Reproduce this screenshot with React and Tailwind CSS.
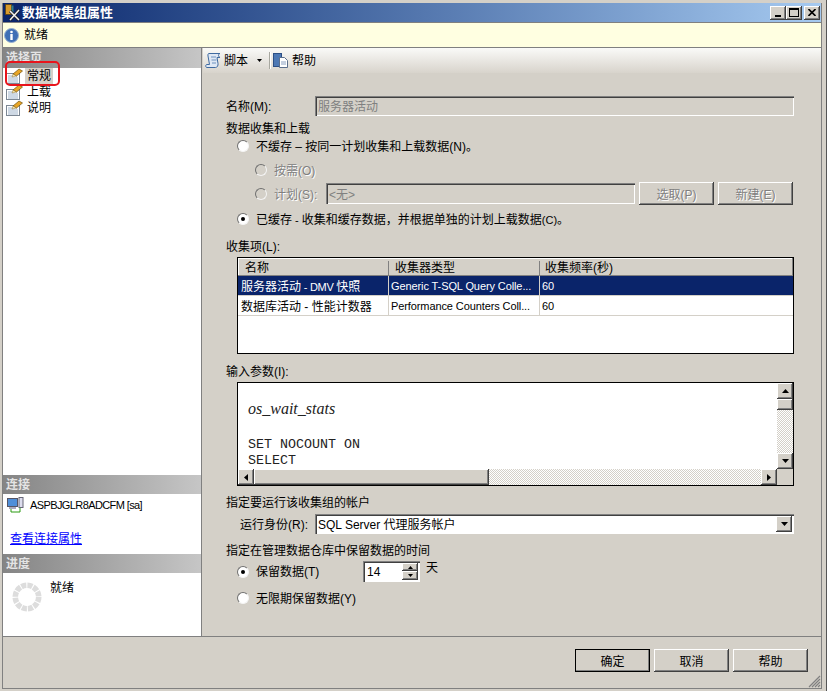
const raised =
  "bg-[#d4d0c8] shadow-[inset_-1px_-1px_0_#404040,inset_1px_1px_0_#fff,inset_-2px_-2px_0_#808080]";
const sunken =
  "shadow-[inset_1px_1px_0_#808080,inset_2px_2px_0_#404040,inset_-1px_-1px_0_#fff]";
const disabledText = "text-[#808080] [text-shadow:1px_1px_0_#fff]";
const dither =
  "bg-[repeating-conic-gradient(#fff_0_25%,#d4d0c8_0_50%)] bg-[length:2px_2px]";

const Arrow = ({ dir }) => {
  const points = {
    up: "0,4 3.5,0 7,4",
    down: "0,0 7,0 3.5,4",
    left: "4,0 4,7 0,3.5",
    right: "0,0 4,3.5 0,7",
  }[dir];
  const size = dir === "up" || dir === "down" ? [7, 4] : [4, 7];
  return (
    <svg width={size[0]} height={size[1]} viewBox={`0 0 ${size[0]} ${size[1]}`}>
      <polygon points={points} fill="#000" />
    </svg>
  );
};

const ScrollBtn = ({ dir, className = "" }) => (
  <div className={`w-[16px] h-[16px] flex items-center justify-center shrink-0 ${raised} ${className}`}>
    <Arrow dir={dir} />
  </div>
);

const Radio = ({ checked, disabled, className = "" }) => (
  <span
    className={`w-[12px] h-[12px] rounded-full flex items-center justify-center shrink-0 border border-t-[#707070] border-l-[#707070] border-r-[#f4f4f4] border-b-[#f4f4f4] ${
      disabled ? "bg-[#d4d0c8]" : "bg-white"
    } ${className}`}
  >
    {checked && <span className="w-[4px] h-[4px] rounded-full bg-black" />}
  </span>
);

const PageIcon = () => (
  <svg width="17" height="16" viewBox="0 0 17 16" className="shrink-0">
    <rect x="0.500" y="5.500" width="13" height="10" fill="#fdfdfd" stroke="#7c8794" />
    <path d="M2 8h4M2 10h10M2 12h10M2 14h10" stroke="#9fb4cc" />
    <path d="M7 6l6-5 3.500 2-6 5z" fill="#e8a526" stroke="#6e5210" strokeWidth="0.700" />
    <path d="M7 6l3.500 2-4.500 1z" fill="#f7e6a8" stroke="#6e5210" strokeWidth="0.400" />
  </svg>
);

const SectionHeader = ({ children }) => (
  <div className="h-[19px] shrink-0 flex items-center pl-[3px] bg-gradient-to-r from-[#858585] to-[#c6c6c6] text-[#e4e4e4] font-bold">
    {children}
  </div>
);

const Spinner = () => (
  <svg width="30" height="30" viewBox="0 0 32 32">
    <circle
      cx="16"
      cy="16"
      r="12.500"
      fill="none"
      stroke="#dddddd"
      strokeWidth="6"
      strokeDasharray="5.400 1.150"
    />
  </svg>
);

const FooterBtn = ({ children, primary }) => (
  <button
    className={`w-[75px] h-[23px] flex items-center justify-center ${raised} ${
      primary ? "outline outline-1 -outline-offset-1 outline-black" : ""
    }`}
  >
    <span className="mt-[2px]">{children}</span>
  </button>
);

const rows = [
  {
    id: "dmv",
    name: (
      <>
        服务器活动<span className="text-[11px] tracking-[-0.3px]"> - DMV </span>快照
      </>
    ),
    type: "Generic T-SQL Query Colle...",
    freq: "60",
    active: true,
  },
  {
    id: "perf",
    name: "数据库活动 - 性能计数器",
    type: "Performance Counters Coll...",
    freq: "60",
  },
];

export default function App() {
  return (
    <div className="w-[827px] h-[691px] overflow-hidden bg-[#d4d0c8] pt-[3px] pl-[2px] flex text-[12px] leading-none text-black [font-family:'Liberation_Sans','Noto_Sans_CJK_SC',sans-serif]">
      <div className="w-[820px] h-[686px] shrink-0 flex flex-col border-x border-b border-[#808080]">
        {/* title bar */}
        <div className="h-[19px] shrink-0 flex items-center bg-gradient-to-r from-[#0a246a] to-[#a6caf0]">
          <svg width="17" height="17" viewBox="0 0 17 17" className="ml-[1px] shrink-0">
            <rect x="1.500" y="0.500" width="6" height="10" fill="#d99a2b" stroke="#5c4210" strokeWidth="0.800" />
            <rect x="7.500" y="1.500" width="2" height="8" fill="#2f7f8c" />
            <path d="M6 7l9 9M15 6l-9 10" stroke="#222" strokeWidth="3" />
            <path d="M6 7l9 9M15 6l-9 10" stroke="#f2f2f2" strokeWidth="1.500" />
          </svg>
          <span className="ml-[1px] text-[13px] text-white font-bold">数据收集组属性</span>
          <div className="ml-auto mr-[1px] flex">
            <div className={`w-[16px] h-[14px] flex items-end justify-center pb-[3px] ${raised}`}>
              <span className="w-[6px] h-[2px] bg-black" />
            </div>
            <div className={`w-[16px] h-[14px] flex items-center justify-center ${raised}`}>
              <span className="w-[10px] h-[9px] border border-t-2 border-black" />
            </div>
            <div className={`w-[16px] h-[14px] ml-[2px] flex items-center justify-center ${raised}`}>
              <svg width="8" height="7" viewBox="0 0 8 7">
                <path d="M0.500 0l7 7M7.500 0l-7 7" stroke="#000" strokeWidth="1.600" />
              </svg>
            </div>
          </div>
        </div>

        {/* status bar */}
        <div className="h-[26px] shrink-0 flex items-center bg-[#ffffe1] border-y border-[#808080] pl-[1px]">
          <svg width="15" height="15" viewBox="0 0 15 15" className="shrink-0">
            <circle cx="7.500" cy="7.500" r="7" fill="#3f6fb5" stroke="#9ab0d0" />
            <circle cx="7.500" cy="4" r="1.300" fill="#fff" />
            <rect x="6.300" y="6" width="2.400" height="6" fill="#fff" />
          </svg>
          <span className="ml-[5px]">就绪</span>
        </div>

        <div className="flex-1 min-h-0 flex">
          {/* left panel */}
          <div className="relative w-[199px] shrink-0 bg-white border-r border-[#808080] flex flex-col">
            <div className="h-[20px] shrink-0 flex items-center pl-[3px] bg-gradient-to-r from-[#858585] to-[#c6c6c6] text-[#e4e4e4] font-bold">
              选择页
            </div>
            <div className="flex flex-col pl-[3px]">
              <div className="h-[16px] flex items-center">
                <PageIcon />
                <span className="ml-[2px] px-[2px] h-[16px] flex items-center bg-[#d4d0c8]">常规</span>
              </div>
              <div className="h-[16px] flex items-center">
                <PageIcon />
                <span className="ml-[2px] px-[2px]">上载</span>
              </div>
              <div className="h-[16px] flex items-center">
                <PageIcon />
                <span className="ml-[2px] px-[2px]">说明</span>
              </div>
            </div>

            <div className="mt-auto">
              <SectionHeader>连接</SectionHeader>
              <div className="h-[60px] relative pt-[3px] pl-[4px]">
                <div className="flex items-center">
                  <svg width="17" height="16" viewBox="0 0 17 16" className="shrink-0">
                    <rect x="0.500" y="1.500" width="10" height="8" fill="#4f8fd8" stroke="#556" />
                    <rect x="2" y="10" width="7" height="2" fill="#aab" />
                    <rect x="12" y="0.500" width="4" height="10" fill="#dde" stroke="#667" />
                    <path d="M4 12v3h9v-4" fill="none" stroke="#2a9a10" />
                  </svg>
                  <span className="ml-[6px] text-[11px] tracking-[-0.6px] whitespace-nowrap">ASPBJGLR8ADCFM [sa]</span>
                </div>
                <a className="absolute left-[7px] top-[39px] text-[#0000ff] underline">查看连接属性</a>
              </div>
              <SectionHeader>进度</SectionHeader>
              <div className="h-[63px] flex pl-[9px] pt-[9px]">
                <Spinner />
                <span className="ml-[8px]">就绪</span>
              </div>
            </div>

            {/* red highlight drawn over the screenshot */}
            <div className="absolute left-[2px] top-[13px] w-[55px] h-[25px] rounded-[5px] border-2 border-[#e8141c]" />
          </div>

          {/* right panel */}
          <div className="flex-1 min-w-0 border-l border-[#d4d0c8] flex flex-col">
            <div className="h-[25px] shrink-0 flex items-center pl-[2px] bg-gradient-to-b from-[#fafaf8] to-[#d8d4cc]">
              <svg width="17" height="17" viewBox="0 0 17 17" className="shrink-0">
                <path
                  d="M4 1.500h11c-2 .5-2 3 0 4h-3l1 6c.3 2-.7 4-2.500 4H1.500c-1-.5-1-2.500 0-3h3L3 4c-.2-1.500 0-2.500 1-2.500z"
                  fill="#dfe8f4"
                  stroke="#3f6aa0"
                />
                <path d="M6 5h5M6.500 8h5M7 11h4" stroke="#6f93c0" />
              </svg>
              <span className="ml-[2px]">脚本</span>
              <svg width="5" height="3" viewBox="0 0 5 3" className="ml-[9px] shrink-0">
                <polygon points="0,0 5,0 2.500,3" fill="#000" />
              </svg>
              <span className="ml-[7px] w-[1px] h-[17px] bg-[#a8a8a0] shadow-[1px_0_0_#fff]" />
              <svg width="16" height="17" viewBox="0 0 16 17" className="ml-[3px] shrink-0">
                <rect x="0.500" y="1.500" width="8" height="13" fill="#4d78b4" stroke="#2c4f85" />
                <path d="M6.500 5.500h5l3 3v7h-8z" fill="#fff" stroke="#5b6f8c" />
                <path d="M8 10h5M8 12h5" stroke="#8aa0c0" />
              </svg>
              <span className="ml-[3px]">帮助</span>
            </div>

            <div className="flex-1 min-h-0 pl-[23px] pr-[27px] pt-[23px] flex flex-col">
              <div className="h-[20px] flex items-center shrink-0">
                <span className="w-[89px] mt-[2px]">名称(M):</span>
                <div className={`flex-1 h-[20px] flex items-center pl-[3px] pt-[2px] text-[#808080] ${sunken}`}>服务器活动</div>
              </div>

              <div className="h-[16px] mt-[4px] pt-[2px] flex items-center shrink-0">数据收集和上载</div>

              <div className="h-[18px] mt-[1px] flex items-center pl-[11px] shrink-0">
                <Radio />
                <span className="ml-[7px] mt-[2px]">不缓存 – 按同一计划收集和上载数据(N)。</span>
              </div>

              <div className="h-[18px] mt-[6px] flex items-center pl-[29px] shrink-0">
                <Radio disabled />
                <span className={`ml-[7px] mt-[2px] ${disabledText}`}>按需(O)</span>
              </div>

              <div className="h-[23px] mt-[3px] flex items-center pl-[29px] shrink-0">
                <Radio disabled />
                <span className={`ml-[7px] mt-[2px] w-[52px] ${disabledText}`}>计划(S):</span>
                <div className={`w-[309px] h-[21px] flex items-center pl-[3px] pt-[2px] text-[#808080] ${sunken}`}>&lt;无&gt;</div>
                <div className={`w-[75px] h-[23px] ml-[4px] pt-[2px] flex items-center justify-center ${raised} ${disabledText}`}>选取(P)</div>
                <div className={`w-[75px] h-[23px] ml-[4px] pt-[2px] flex items-center justify-center ${raised} ${disabledText}`}>新建(E)</div>
              </div>

              <div className="h-[18px] mt-[5px] flex items-center pl-[11px] shrink-0">
                <Radio checked />
                <span className="ml-[7px] mt-[2px] whitespace-nowrap">
                  已缓存<span className="text-[11px]"> - </span>收集和缓存数据，并根据单独的计划上载数据<span className="text-[11px]">(C)</span>。
                </span>
              </div>

              <div className="h-[16px] mt-[10px] pt-[2px] flex items-center shrink-0">收集项(L):</div>

              {/* collection items */}
              <div className="h-[97px] mt-[3px] ml-[11px] border border-black bg-white shrink-0">
                <div className="h-[18px] pt-[2px] flex items-center bg-[#d4d0c8] shadow-[inset_-1px_-1px_0_#808080,inset_1px_1px_0_#fff]">
                  <div className="w-[150px] pl-[7px]">名称</div>
                  <div className="w-[151px] h-[14px] pl-[6px] flex items-center border-l border-[#808080]">收集器类型</div>
                  <div className="h-[14px] pl-[5px] flex items-center border-l border-[#808080]">收集频率(秒)</div>
                </div>
                {rows.map((row) => (
                  <div
                    key={row.id}
                    className={`h-[20px] flex items-center border-b border-[#d4d0c8] ${
                      row.active ? "bg-[#0a246a] text-white" : ""
                    }`}
                  >
                    <div className="w-[150px] pl-[3px] pt-[2px] whitespace-nowrap">{row.name}</div>
                    <div className="w-[151px] h-[19px] pl-[2px] pt-[2px] flex items-center border-l border-[#d4d0c8] text-[11px] tracking-[-0.1px] whitespace-nowrap">
                      {row.type}
                    </div>
                    <div className="h-[19px] pl-[2px] pt-[2px] flex items-center border-l border-[#d4d0c8] text-[11px]">{row.freq}</div>
                  </div>
                ))}
              </div>

              <div className="h-[16px] mt-[9px] pt-[2px] flex items-center shrink-0">输入参数(I):</div>

              {/* input parameters */}
              <div className="h-[104px] mt-[3px] ml-[11px] border border-black bg-white flex shrink-0">
                <div className="flex-1 min-w-0 flex flex-col">
                  <div className="flex-1 min-h-0 pl-[10px] pt-[18px] text-[#222222]">
                    <div className="h-[20px] text-[16px] italic [font-family:'Liberation_Serif',serif]">os_wait_stats</div>
                    <div className="h-[16px] mt-[17px] text-[13.33px] [font-family:'Liberation_Mono',monospace]">SET NOCOUNT ON</div>
                    <div className="h-[16px] text-[13.33px] [font-family:'Liberation_Mono',monospace]">SELECT</div>
                  </div>
                  <div className="h-[16px] shrink-0 flex">
                    <ScrollBtn dir="left" />
                    <div className={`w-[235px] h-[16px] ${raised}`} />
                    <div className={`flex-1 h-[16px] ${dither}`} />
                    <ScrollBtn dir="right" />
                  </div>
                </div>
                <div className="w-[16px] shrink-0 flex flex-col">
                  <ScrollBtn dir="up" />
                  <div className={`h-[11px] shrink-0 ${raised}`} />
                  <div className={`flex-1 ${dither}`} />
                  <ScrollBtn dir="down" />
                  <div className="h-[16px] shrink-0 bg-[#d4d0c8]" />
                </div>
              </div>

              <div className="h-[16px] mt-[8px] pt-[2px] flex items-center shrink-0">指定要运行该收集组的帐户</div>

              <div className="h-[20px] mt-[4px] flex items-center shrink-0">
                <span className="w-[89px] pl-[14px] mt-[2px]">运行身份(R):</span>
                <div className={`flex-1 h-[20px] flex items-center pl-[3px] pr-[2px] bg-white ${sunken}`}>
                  <span className="mt-[2px]">SQL Server 代理服务帐户</span>
                  <div className={`ml-auto w-[16px] h-[16px] flex items-center justify-center ${raised}`}>
                    <Arrow dir="down" />
                  </div>
                </div>
              </div>

              <div className="h-[16px] mt-[8px] pt-[2px] flex items-center shrink-0">指定在管理数据仓库中保留数据的时间</div>

              <div className="h-[21px] mt-[3px] flex items-center pl-[11px] shrink-0">
                <Radio checked />
                <span className="ml-[7px] w-[107px]">保留数据(T)</span>
                <div className={`w-[57px] h-[21px] flex items-center pl-[4px] pr-[2px] bg-white ${sunken}`}>
                  <span>14</span>
                  <div className="ml-auto w-[16px] flex flex-col">
                    <div className={`h-[8px] flex items-center justify-center ${raised}`}>
                      <svg width="5" height="3" viewBox="0 0 5 3">
                        <polygon points="0,3 5,3 2.500,0" fill="#000" />
                      </svg>
                    </div>
                    <div className={`h-[9px] flex items-center justify-center ${raised}`}>
                      <svg width="5" height="3" viewBox="0 0 5 3">
                        <polygon points="0,0 5,0 2.500,3" fill="#000" />
                      </svg>
                    </div>
                  </div>
                </div>
                <span className="ml-[6px] mb-[7px]">天</span>
              </div>

              <div className="h-[18px] mt-[7px] flex items-center pl-[11px] shrink-0">
                <Radio />
                <span className="ml-[7px] mt-[2px]">无限期保留数据(Y)</span>
              </div>
            </div>
          </div>
        </div>

        {/* footer */}
        <div className="relative h-[52px] shrink-0 border-t border-[#808080] flex justify-end gap-[4px] pt-[12px] pr-[13px]">
          <FooterBtn primary>确定</FooterBtn>
          <FooterBtn>取消</FooterBtn>
          <FooterBtn>帮助</FooterBtn>
          <svg width="13" height="13" viewBox="0 0 13 13" className="absolute right-0 bottom-0">
            <path d="M12 1L1 12M12 4L4 12M12 7L7 12M12 10L10 12" stroke="#808080" strokeWidth="1.200" />
          </svg>
        </div>
      </div>

      {/* edge of the window behind */}
      <div className="ml-auto w-[1px] h-[691px] -mt-[3px] bg-[#555555] shrink-0" />
    </div>
  );
}
